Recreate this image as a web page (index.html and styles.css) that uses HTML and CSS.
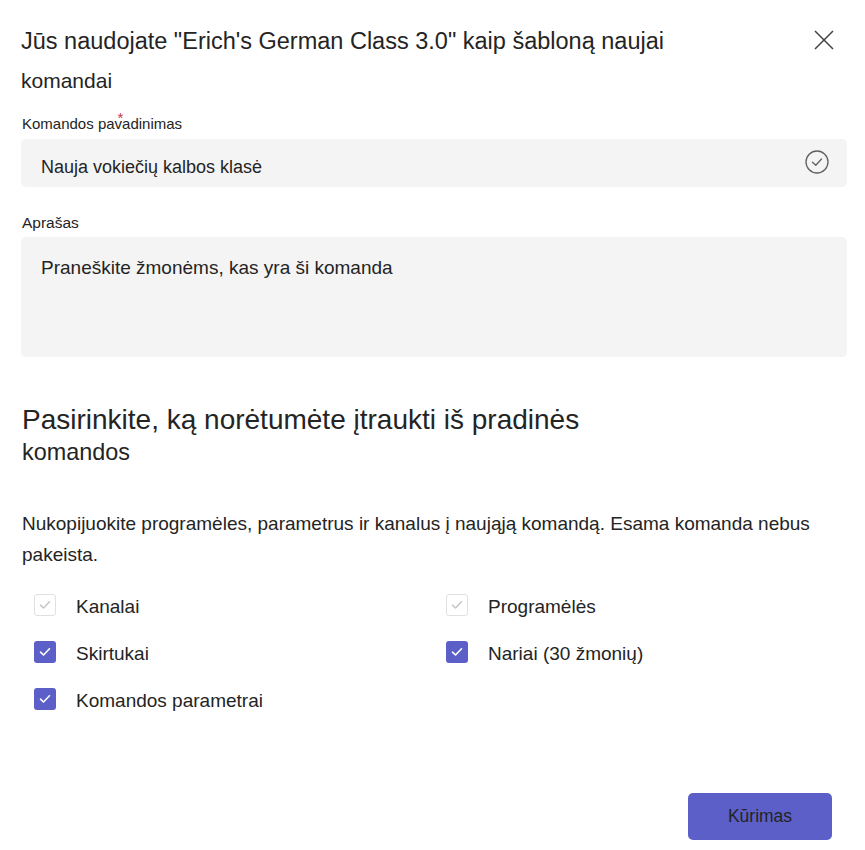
FILE: index.html
```html
<!DOCTYPE html>
<html lang="lt">
  <head>
    <meta charset="UTF-8" />
    <meta name="viewport" content="width=device-width, initial-scale=1.0" />
    <title>Komandos kūrimas iš šablono</title>
    <link rel="stylesheet" href="styles.css">
  </head>
  <body>
    <div class="dialog">
      <div class="header">
        <h1 class="title">Jūs naudojate "Erich's German Class 3.0" kaip šabloną naujai <span class="title-rest">komandai</span></h1>
        <button class="close-btn" aria-label="Uždaryti">
          <svg width="20" height="20" viewBox="0 0 20 20">
            <path d="M1 1 L19 19 M19 1 L1 19" stroke="#424242" stroke-width="1.5" fill="none" />
          </svg>
        </button>
      </div>

      <label class="field-label" for="teamName">Komandos pa<span class="req">v</span>adinimas</label>
      <div class="input-box">
        <input type="text" id="teamName" value="Nauja vokiečių kalbos klasė" />
        <svg class="ok-icon" width="26" height="26" viewBox="0 0 26 26">
          <circle cx="13" cy="13" r="11" stroke="#616161" stroke-width="1.3" fill="none" />
          <path d="M8.5 13.3 L11.8 16.3 L17.5 10" stroke="#616161" stroke-width="1.3" fill="none" stroke-linecap="round" stroke-linejoin="round" />
        </svg>
      </div>

      <label class="field-label desc-label" for="teamDesc">Aprašas</label>
      <textarea id="teamDesc" class="desc-box">Praneškite žmonėms, kas yra ši komanda</textarea>

      <h2 class="section-title">Pasirinkite, ką norėtumėte įtraukti iš pradinės <span class="section-rest">komandos</span></h2>

      <p class="info">Nukopijuokite programėles, parametrus ir kanalus į naująją komandą. Esama komanda nebus pakeista.</p>

      <div class="options">
        <label class="option">
          <span class="box disabled"><svg width="12" height="10" viewBox="0 0 12 10"><path d="M1.5 5.2 L4.5 8 L10.5 1.8" stroke="#c7c7c7" stroke-width="1.6" fill="none" stroke-linecap="round" stroke-linejoin="round" /></svg></span>
          <span class="option-text">Kanalai</span>
        </label>
        <label class="option">
          <span class="box disabled"><svg width="12" height="10" viewBox="0 0 12 10"><path d="M1.5 5.2 L4.5 8 L10.5 1.8" stroke="#c7c7c7" stroke-width="1.6" fill="none" stroke-linecap="round" stroke-linejoin="round" /></svg></span>
          <span class="option-text">Programėlės</span>
        </label>
        <label class="option">
          <span class="box checked"><svg width="12" height="10" viewBox="0 0 12 10"><path d="M1.5 5.2 L4.5 8 L10.5 1.8" stroke="#fff" stroke-width="1.6" fill="none" stroke-linecap="round" stroke-linejoin="round" /></svg></span>
          <span class="option-text">Skirtukai</span>
        </label>
        <label class="option">
          <span class="box checked"><svg width="12" height="10" viewBox="0 0 12 10"><path d="M1.5 5.2 L4.5 8 L10.5 1.8" stroke="#fff" stroke-width="1.6" fill="none" stroke-linecap="round" stroke-linejoin="round" /></svg></span>
          <span class="option-text">Nariai (30 žmonių)</span>
        </label>
        <label class="option">
          <span class="box checked"><svg width="12" height="10" viewBox="0 0 12 10"><path d="M1.5 5.2 L4.5 8 L10.5 1.8" stroke="#fff" stroke-width="1.6" fill="none" stroke-linecap="round" stroke-linejoin="round" /></svg></span>
          <span class="option-text">Komandos parametrai</span>
        </label>
      </div>

      <div class="footer">
        <button class="create-btn">Kūrimas</button>
      </div>
    </div>
  </body>
</html>
```

FILE: styles.css
```css
body {
  font-family: "Liberation Sans", Arial, sans-serif;
  background-color: #fff;
  color: #242424;
  margin: 0;
}

.dialog {
  padding: 22px 18px 0 21px;
}

.header {
  display: flex;
  justify-content: space-between;
  align-items: flex-start;
}

.title {
  font-size: 23.5px;
  font-weight: normal;
  line-height: 39px;
  margin: 0;
  width: 700px;
}

.title-rest {
  display: block;
  font-size: 21px;
}

.close-btn {
  background: none;
  border: none;
  padding: 0;
  margin: 8px 13px 0 0;
  cursor: pointer;
}

.field-label {
  display: block;
  font-size: 15px;
  margin: 15px 0 0 1px;
  line-height: 18px;
}

.req {
  position: relative;
}

.req::before {
  content: "*";
  color: #c4314b;
  position: absolute;
  left: 3px;
  top: -6px;
}

.input-box {
  display: flex;
  align-items: center;
  background-color: #f4f4f4;
  border-radius: 5px;
  height: 48px;
  margin-top: 6px;
  padding: 0 17px 0 20px;
}

.input-box input {
  flex: 1;
  border: none;
  background: none;
  font-family: inherit;
  font-size: 18px;
  color: #242424;
  padding: 0;
  margin-top: 8px;
  outline: none;
}

.ok-icon {
  margin-top: -2px;
}

.desc-label {
  font-size: 15.5px;
  margin-top: 27px;
}

.desc-box {
  display: block;
  width: 100%;
  box-sizing: border-box;
  height: 120px;
  margin-top: 5px;
  border: none;
  border-radius: 5px;
  background-color: #f4f4f4;
  font-family: inherit;
  font-size: 19px;
  color: #242424;
  padding: 20px 20px;
  resize: none;
}

.section-title {
  font-size: 28px;
  font-weight: normal;
  line-height: 33px;
  margin: 46px 0 0 1px;
  width: 700px;
}

.section-rest {
  display: block;
  font-size: 23.4px;
}

.info {
  font-size: 19px;
  line-height: 31px;
  margin: 39px 0 0 1px;
}

.options {
  display: grid;
  grid-template-columns: 412px 1fr;
  row-gap: 24px;
  margin-top: 23px;
  padding-left: 13px;
}

.option {
  display: flex;
  align-items: center;
  font-size: 19px;
  height: 23px;
}

.option-text {
  padding-top: 4px;
}

.box {
  width: 22px;
  height: 22px;
  box-sizing: border-box;
  border-radius: 3px;
  display: flex;
  align-items: center;
  justify-content: center;
  margin-right: 20px;
}

.box.disabled {
  border: 1px solid #e0e0e0;
  background-color: #fff;
}

.box.checked {
  background-color: #5b5fc7;
}

.footer {
  display: flex;
  justify-content: flex-end;
  margin-top: 83px;
  padding-right: 15px;
}

.create-btn {
  width: 144px;
  height: 47px;
  background-color: #5b5fc7;
  color: #242424;
  border: none;
  border-radius: 5px;
  font-family: inherit;
  font-size: 17.5px;
  cursor: pointer;
}
```
